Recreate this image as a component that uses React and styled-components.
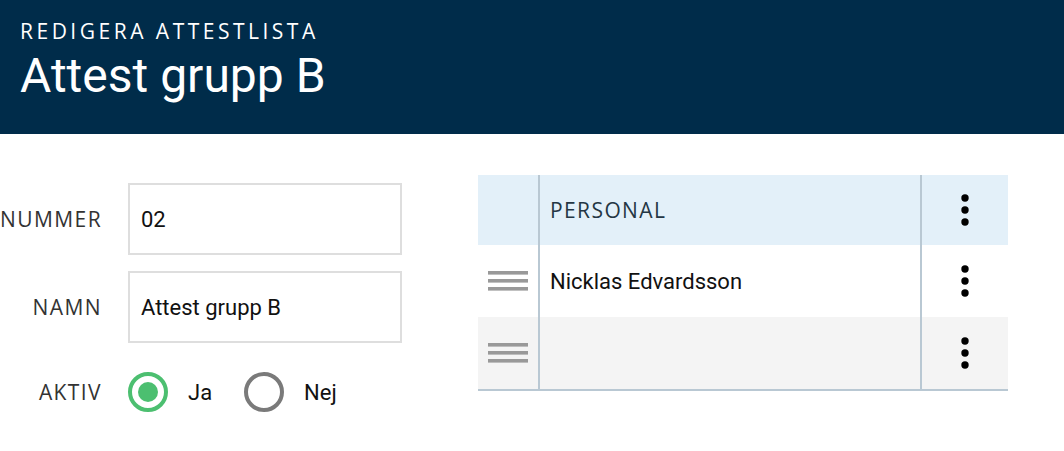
import React from "react";
import styled, { createGlobalStyle } from "styled-components";

const Global = createGlobalStyle`
  html, body { margin: 0; padding: 0; background: #fff; }
  body { font-family: Roboto, "Liberation Sans", sans-serif; color: #111; }
  * { box-sizing: border-box; }
`;

const Page = styled.div`
  width: 1064px;
  height: 451px;
  overflow: hidden;
  background: #fff;
`;

const Header = styled.header`
  height: 134px;
  background: #002c4a;
  padding: 21px 0 0 20px;
  color: #fff;
`;

const Overline = styled.div`
  font-family: "Open Sans", sans-serif;
  font-size: 21px;
  line-height: 21px;
  letter-spacing: 3.5px;
  text-transform: uppercase;
`;

const Title = styled.h1`
  margin: 10px 0 0;
  font-family: Roboto, sans-serif;
  font-weight: 400;
  font-size: 48px;
  line-height: 48px;
`;

const Main = styled.main`
  display: flex;
  align-items: flex-start;
`;

const Form = styled.div`
  margin-top: 49px;
  display: grid;
  grid-template-columns: 101px 274px;
  grid-template-rows: 72px 72px 66px;
  column-gap: 27px;
  row-gap: 16px;
  align-items: center;
`;

const Label = styled.label`
  font-family: "Open Sans", sans-serif;
  font-size: 21px;
  letter-spacing: 1.4px;
  color: #333;
  text-align: right;
  white-space: nowrap;
  justify-self: end;
  margin-right: -1px;
`;

const Input = styled.input`
  width: 274px;
  height: 72px;
  border: 2px solid #dedede;
  padding: 0 11px;
  font-family: Roboto, sans-serif;
  font-size: 22px;
  color: #111;
  outline: none;
  background: #fff;
`;

const RadioGroup = styled.div`
  display: flex;
  align-items: center;
`;

const RadioOption = styled.label`
  display: flex;
  align-items: center;
  gap: 20px;
  margin-right: 32px;
  font-family: Roboto, sans-serif;
  font-size: 22px;
  color: #111;
`;

const RadioCircle = styled.span`
  width: 40px;
  height: 40px;
  border-radius: 50%;
  border: 4px solid ${(p) => (p.checked ? "#4cbf70" : "#7a7a7a")};
  display: flex;
  align-items: center;
  justify-content: center;
  &::after {
    content: "";
    width: 20px;
    height: 20px;
    border-radius: 50%;
    background: ${(p) => (p.checked ? "#4cbf70" : "transparent")};
  }
`;

const Table = styled.div`
  margin-top: 41px;
  margin-left: 76px;
  width: 530px;
  border-bottom: 2px solid #b9c8d3;
`;

const Row = styled.div`
  display: grid;
  grid-template-columns: 60px 2px 380px 2px 86px;
  height: ${(p) => (p.head ? 70 : 72)}px;
  background: ${(p) => (p.head ? "#e3f0f9" : p.alt ? "#f4f4f4" : "#fff")};
`;

const Sep = styled.div`
  background: #b9c8d3;
`;

const Cell = styled.div`
  display: flex;
  align-items: center;
  justify-content: ${(p) => (p.center ? "center" : "flex-start")};
  padding: ${(p) => (p.center ? "0" : "0 10px")};
`;

const HeadText = styled.span`
  font-family: "Open Sans", sans-serif;
  font-size: 21px;
  letter-spacing: 1.4px;
  color: #243644;
`;

const BodyText = styled.span`
  font-family: Roboto, sans-serif;
  font-size: 22px;
  color: #111;
`;

const DragHandle = () => (
  <svg width="40" height="20" viewBox="0 0 40 20">
    <rect x="0" y="0" width="40" height="3.6" fill="#999" />
    <rect x="0" y="8" width="40" height="3.6" fill="#999" />
    <rect x="0" y="16" width="40" height="3.6" fill="#999" />
  </svg>
);

const Kebab = () => (
  <svg width="8" height="32" viewBox="0 0 8 32">
    <circle cx="4" cy="4" r="3.7" fill="#000" />
    <circle cx="4" cy="16" r="3.7" fill="#000" />
    <circle cx="4" cy="28" r="3.7" fill="#000" />
  </svg>
);

const rows = [
  { name: "Nicklas Edvardsson" },
  { name: "", alt: true },
];

export default function App() {
  return (
    <Page>
      <Global />
      <Header>
        <Overline>Redigera attestlista</Overline>
        <Title>Attest grupp B</Title>
      </Header>
      <Main>
        <Form>
          <Label>NUMMER</Label>
          <Input defaultValue="02" />
          <Label>NAMN</Label>
          <Input defaultValue="Attest grupp B" />
          <Label>AKTIV</Label>
          <RadioGroup>
            <RadioOption>
              <RadioCircle checked />
              Ja
            </RadioOption>
            <RadioOption>
              <RadioCircle />
              Nej
            </RadioOption>
          </RadioGroup>
        </Form>
        <Table>
          <Row head>
            <Cell />
            <Sep />
            <Cell>
              <HeadText>PERSONAL</HeadText>
            </Cell>
            <Sep />
            <Cell center>
              <Kebab />
            </Cell>
          </Row>
          {rows.map((r, i) => (
            <Row key={i} alt={r.alt}>
              <Cell center>
                <DragHandle />
              </Cell>
              <Sep />
              <Cell>
                <BodyText>{r.name}</BodyText>
              </Cell>
              <Sep />
              <Cell center>
                <Kebab />
              </Cell>
            </Row>
          ))}
        </Table>
      </Main>
    </Page>
  );
}
